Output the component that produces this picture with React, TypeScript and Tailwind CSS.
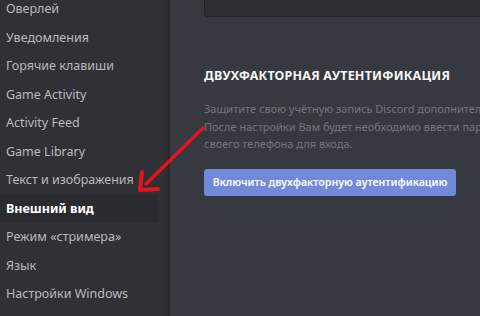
const items = [
  "Оверлей",
  "Уведомления",
  "Горячие клавиши",
  "Game Activity",
  "Activity Feed",
  "Game Library",
  "Текст и изображения",
  "Внешний вид",
  "Режим «стримера»",
  "Язык",
  "Настройки Windows",
];

export default function App() {
  return (
    <div
      className="relative flex h-[316px] w-[480px] overflow-hidden bg-[#36393f]"
      style={{ fontFamily: '"Noto Sans", "Open Sans", sans-serif' }}
    >
      <aside className="flex h-full w-[164px] shrink-0 flex-col bg-[#2f3136]">
        <div className="-mt-[5px] flex flex-col">
          {items.map((item) => {
            const active = item === "Внешний вид";
            return (
              <div
                key={item}
                className={`flex h-[28.5px] shrink-0 items-center px-[6px] text-[12.5px] leading-none ${active ? "mr-[6px] bg-[#292b2f] font-bold text-white" : "text-[#b9bbbe]"}`}
              >
                {item}
              </div>
            );
          })}
        </div>
      </aside>
      <div className="h-full w-[4px] shrink-0 bg-[#2b2d31]" />
      <div className="h-full w-[2px] shrink-0 bg-[#25272b]" />
      <main className="flex min-w-0 flex-1 flex-col pl-[34px]">
        <div className="h-[17px] rounded-bl-[4px] border-b border-l border-[#222428] bg-[#2d2f33]" />
        <h2 className="mt-[51px] whitespace-nowrap text-[12.5px] font-bold leading-[16px] tracking-[0.2px] text-[#f6f6f7]">
          ДВУХФАКТОРНАЯ АУТЕНТИФИКАЦИЯ
        </h2>
        <div className="mt-[16px] whitespace-nowrap text-[11px] leading-[17.5px] text-[#72767d]">
          <div>Защитите свою учётную запись Discord дополнительной защитой.</div>
          <div>После настройки Вам будет необходимо ввести пароль и код</div>
          <div>своего телефона для входа.</div>
        </div>
        <div className="mt-[15px]">
          <button className="h-[27px] w-[252px] whitespace-nowrap rounded-[3px] bg-[#7289da] text-[10.6px] font-semibold text-white">
            Включить двухфакторную аутентификацию
          </button>
        </div>
      </main>
      <svg className="absolute left-0 top-0" width="480" height="316" viewBox="0 0 480 316">
        <line x1="203" y1="128" x2="146" y2="184" stroke="#e3141c" strokeWidth="3.5" strokeLinecap="round" />
        <path d="M140 190 L142 172 M140 190 L158 189" stroke="#e3141c" strokeWidth="4" strokeLinecap="round" fill="none" />
      </svg>
    </div>
  );
}
